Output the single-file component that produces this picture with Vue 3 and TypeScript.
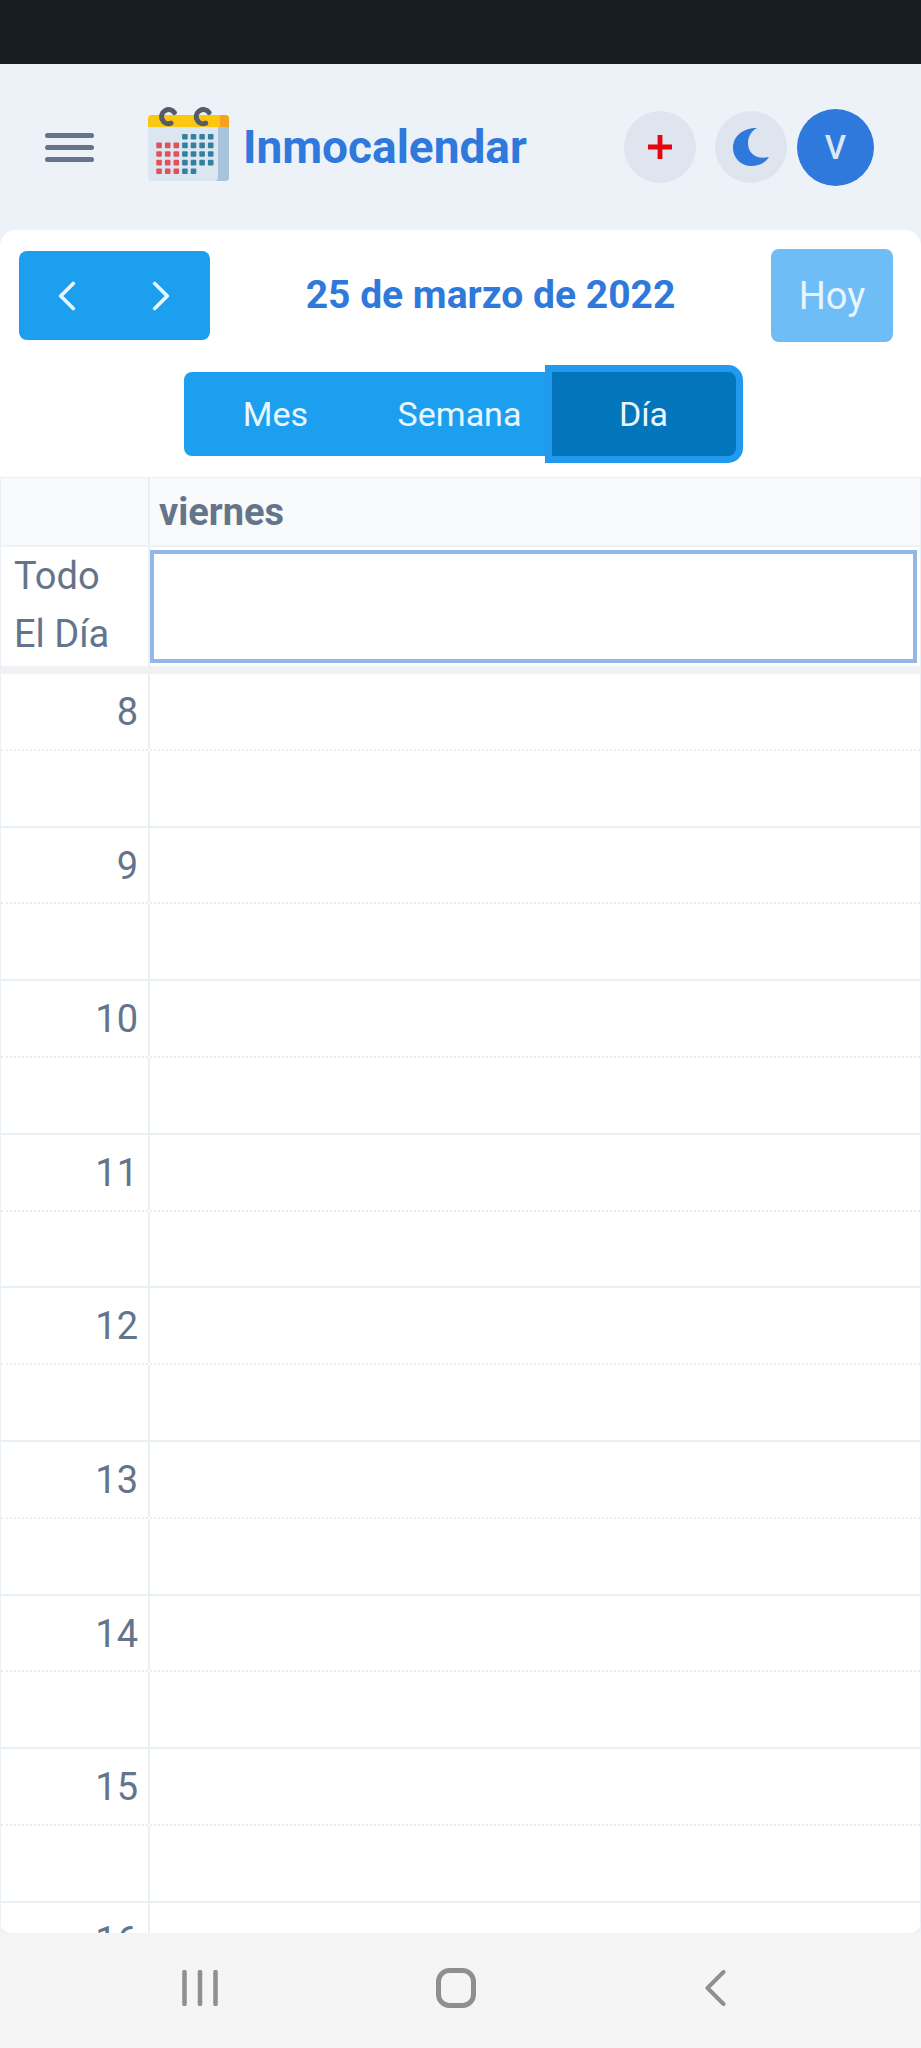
<script setup lang="ts">
const hours = [8, 9, 10, 11, 12, 13, 14, 15, 16]
const views = [
  { label: 'Mes', active: false },
  { label: 'Semana', active: false },
  { label: 'Día', active: true }
]
const redDots = [
  [0, 1], [1, 1], [2, 1],
  [0, 2], [1, 2], [2, 2],
  [0, 3], [1, 3], [2, 3],
  [0, 4], [1, 4], [2, 4]
]
const blueDots = [
  [3, 0], [4, 0], [5, 0], [6, 0],
  [3, 1], [4, 1], [5, 1], [6, 1],
  [3, 2], [4, 2], [5, 2], [6, 2],
  [3, 3], [4, 3], [5, 3], [6, 3],
  [3, 4], [4, 4]
]
</script>

<template>
  <div class="page">
    <div class="status"></div>
    <header class="top">
      <div class="burger"><span></span><span></span><span></span></div>
      <svg class="logo" viewBox="0 0 81 74" width="81" height="74">
        <rect x="0" y="8" width="81" height="66" rx="4" fill="#dbe6f0" />
        <path d="M70 20h11v50a4 4 0 0 1-4 4H68a6 6 0 0 0 2-5z" fill="#a9c3dd" />
        <path d="M4 8h73a4 4 0 0 1 4 4v8H0v-8a4 4 0 0 1 4-4z" fill="#fdc70f" />
        <path d="M72 8h5a4 4 0 0 1 4 4v8h-9z" fill="#f6a221" />
        <path d="M26.300 5.500A7 7 0 1 0 23 16.200" fill="none" stroke="#555c69" stroke-width="5" stroke-linecap="round" />
        <path d="M61 5.500A7 7 0 1 0 57.700 16.200" fill="none" stroke="#555c69" stroke-width="5" stroke-linecap="round" />
        <rect v-for="d in redDots" :key="'r' + d" :x="8.3 + d[0] * 8.6" :y="27 + d[1] * 8.6" width="5.6" height="5.6" rx="1" fill="#e25157" />
        <rect v-for="d in blueDots" :key="'b' + d" :x="8.3 + d[0] * 8.6" :y="27 + d[1] * 8.6" width="5.6" height="5.6" rx="1" fill="#33809f" />
      </svg>
      <div class="brand">Inmocalendar</div>
      <div class="actions">
        <button class="round">
          <svg viewBox="0 0 24 24" width="24" height="24"><path d="M9.600 0h4.800v9.600H24v4.800h-9.600V24H9.600v-9.600H0V9.600h9.600z" fill="#e5050f" /></svg>
        </button>
        <button class="round">
          <svg viewBox="0 0 36 38" width="36" height="38"><path d="M24 0C10 0 0 8 0 20c0 10 8 18 18 18 8 0 14-3 18-9-12 3-21-3-21-14C15 9 18 3 24 0z" fill="#2f78dc" /></svg>
        </button>
        <div class="avatar">V</div>
      </div>
    </header>

    <main class="card">
      <div class="toolbar">
        <div class="arrows">
          <svg viewBox="0 0 16 24" width="20" height="30"><path d="M13 2 3 12l10 10" fill="none" stroke="#e6f5ff" stroke-width="3" stroke-linecap="round" stroke-linejoin="round" /></svg>
          <svg viewBox="0 0 16 24" width="20" height="30"><path d="m3 2 10 10L3 22" fill="none" stroke="#e6f5ff" stroke-width="3" stroke-linecap="round" stroke-linejoin="round" /></svg>
        </div>
        <h2 class="date">25 de marzo de 2022</h2>
        <button class="today">Hoy</button>
      </div>

      <div class="views">
        <div class="view-group">
          <button v-for="v in views" :key="v.label" class="view" :class="{ active: v.active }">{{ v.label }}</button>
        </div>
      </div>

      <div class="calendar">
        <div class="head">
          <div class="time-col"></div>
          <div class="day-name">viernes</div>
        </div>
        <div class="allday">
          <div class="time-col allday-label">Todo<br />El Día</div>
          <div class="allday-cell"></div>
        </div>
        <div class="divider"></div>
        <div v-for="h in hours" :key="h" class="hour">
          <div class="half half-top">
            <div class="time-col hour-label">{{ h }}</div>
          </div>
          <div class="half half-bottom">
            <div class="time-col"></div>
          </div>
        </div>
      </div>
    </main>

    <footer class="navbar">
      <svg class="nav-bars" viewBox="0 0 36 36" width="36" height="36"><path d="M2.500 2v32M18 2v32M33.500 2v32" fill="none" stroke="#8f8f8f" stroke-width="4.500" stroke-linecap="round" /></svg>
      <svg class="nav-home" viewBox="0 0 40 40" width="40" height="40"><rect x="2.500" y="2.500" width="35" height="35" rx="11" fill="none" stroke="#8f8f8f" stroke-width="5" /></svg>
      <svg class="nav-back" viewBox="0 0 21 36" width="21" height="36"><path d="M18.500 2 2.500 18l16 16" fill="none" stroke="#8f8f8f" stroke-width="4" stroke-linecap="round" stroke-linejoin="round" /></svg>
    </footer>
  </div>
</template>

<style>
html,
body {
  margin: 0;
  background: #edf2f8;
}
</style>

<style scoped>
.page {
  width: 921px;
  height: 2048px;
  display: flex;
  flex-direction: column;
  overflow: hidden;
  font-family: Roboto, "Liberation Sans", sans-serif;
  background: #edf2f8;
}

.status {
  height: 64px;
  flex: none;
  background: #171c21;
}

.top {
  height: 166px;
  flex: none;
  display: flex;
  align-items: center;
  padding-left: 45px;
  box-sizing: border-box;
}

.burger {
  width: 49px;
  display: flex;
  flex-direction: column;
  gap: 7px;
}

.burger span {
  height: 5px;
  border-radius: 3px;
  background: #64748b;
}

.logo {
  margin-left: 54px;
  margin-bottom: 6px;
}

.brand {
  margin-left: 14px;
  font-size: 46px;
  font-weight: 700;
  color: #2f78dc;
}

.actions {
  margin-left: auto;
  margin-right: 47px;
  display: flex;
  align-items: center;
}

.round {
  width: 72px;
  height: 72px;
  padding: 0;
  border: 0;
  border-radius: 50%;
  margin-right: 19px;
  display: flex;
  align-items: center;
  justify-content: center;
  background: #dee5ee;
}

.round + .round {
  margin-right: 10px;
}

.avatar {
  width: 77px;
  height: 77px;
  border-radius: 50%;
  display: flex;
  align-items: center;
  justify-content: center;
  font-size: 33px;
  font-weight: 500;
  color: #dbe7f5;
  background: #2f78dc;
}

.card {
  flex: 1;
  min-height: 0;
  overflow: hidden;
  border-radius: 16px 16px 12px 12px;
  background: #fff;
}

.toolbar {
  display: flex;
  align-items: center;
  justify-content: space-between;
  padding: 19px 28px 0 19px;
}

.arrows {
  width: 191px;
  height: 89px;
  box-sizing: border-box;
  padding: 0 39px 0 38px;
  border-radius: 8px;
  display: flex;
  align-items: center;
  justify-content: space-between;
  background: #1d9ff0;
}

.date {
  margin: 0 0 2px;
  font-size: 39px;
  font-weight: 700;
  color: #2f78dc;
}

.today {
  width: 122px;
  height: 93px;
  padding: 0;
  border: 0;
  border-radius: 8px;
  font-family: inherit;
  font-size: 38px;
  color: #e8f5ff;
  background: #6ebdf7;
}

.views {
  display: flex;
  justify-content: center;
  margin-top: 30px;
}

.view-group {
  display: flex;
  height: 84px;
  margin-left: -2px;
  border-radius: 8px;
  background: #1d9ff0;
}

.view {
  width: 184px;
  height: 84px;
  padding: 0;
  border: 0;
  border-radius: 8px;
  font-family: inherit;
  font-size: 34px;
  color: #eaf6ff;
  background: transparent;
}

.view.active {
  border-radius: 0 8px 8px 0;
  background: #0275bb;
  box-shadow: 0 0 0 7px #2199ee;
}

.calendar {
  margin-top: 21px;
  border-top: 1px solid #eaf0f5;
  border-left: 1px solid #eaf0f5;
  border-right: 1px solid #eaf0f5;
}

.head {
  display: flex;
  height: 67px;
  background: #f8fafc;
  border-bottom: 2px solid #eef3f7;
}

.time-col {
  width: 149px;
  flex: none;
  box-sizing: border-box;
  border-right: 2px solid #e8f0f4;
}

.day-name {
  padding-left: 9px;
  line-height: 69px;
  font-size: 38px;
  font-weight: 700;
  color: #64748b;
}

.allday {
  display: flex;
  height: 119px;
}

.allday-label {
  padding-left: 13px;
  font-size: 38px;
  line-height: 58px;
  color: #64748b;
}

.allday-cell {
  flex: 1;
  box-sizing: border-box;
  margin: 3px 3px 3px 0;
  border: 4px solid #94b8e6;
}

.divider {
  height: 8px;
  background: #f0f1f3;
}

.half {
  display: flex;
  height: 76.8px;
  box-sizing: border-box;
}

.half-top {
  border-bottom: 2px dotted #e8edf0;
}

.half-bottom {
  border-bottom: 2px solid #e8f0f4;
}

.hour-label {
  padding: 9px 10px 0 0;
  text-align: right;
  font-size: 38px;
  line-height: 58px;
  color: #64748b;
}

.navbar {
  height: 115px;
  flex: none;
  display: flex;
  align-items: center;
  box-sizing: border-box;
  padding: 0 0 5px 182px;
  background: #f5f5f5;
}

.nav-home {
  margin-left: 218px;
}

.nav-back {
  margin-left: 229px;
}
</style>
